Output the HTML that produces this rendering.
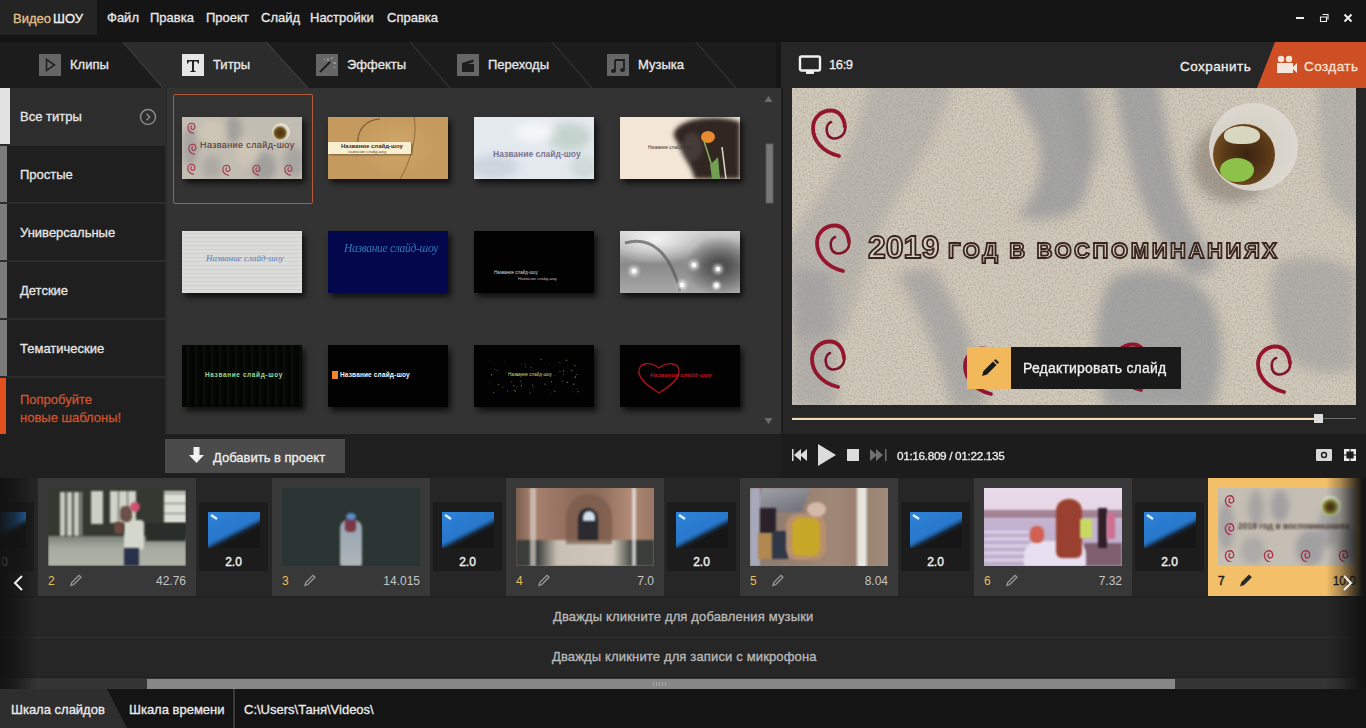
<!DOCTYPE html><html><head><meta charset="utf-8"><style>
*{margin:0;padding:0;box-sizing:border-box}
html,body{width:1366px;height:728px;overflow:hidden;background:#151515;font-family:"Liberation Sans",sans-serif;color:#e6e6e6}
body{position:relative}
.a{position:absolute}
.t13{font-size:13px;line-height:15px;white-space:nowrap;-webkit-text-stroke:0.3px currentColor}
.menu{top:10px;color:#e8e8e8}
.ticon{top:12px;width:22px;height:22px;background:#666666}
.tlabel{top:16px;color:#e8e8e8}
.sitem{left:0;width:165px;height:58px;background:#1f1f1f;border-bottom:2px solid #2c2c2c}
.sitem .ind{position:absolute;left:0;top:0;width:7px;height:56px;background:#7b7b7b}
.sitem .txt{position:absolute;left:20px;top:21px}
.th{width:120px;height:62px;box-shadow:3px 4px 6px rgba(0,0,0,.7);overflow:hidden}
.clip{top:478px;width:158px;height:119px;background:#383838}
.ph{left:10px;top:10px;width:138px;height:78px;overflow:hidden}
.ph>div{filter:blur(1px)}
.num{left:10px;top:96px;font-size:12px;color:#e6bf5e}
.dur{right:10px;top:96px;font-size:12px;color:#c4c4c4;text-align:right}
.pen{left:31px;top:95px;width:14px;height:14px}
.trans{top:478px;width:76px;height:119px;background:#262626}
.tbox{left:3px;top:24px;width:69px;height:69px;background:#1c1c1c}
.tblue{left:9px;top:10px;width:52px;height:36px;background:linear-gradient(153deg,#2e82d8 0%,#2878cc 50%,#1e5a9a 55%,#18283a 60%,#161616 66%,#161616 100%)}
.tnum{left:0;width:69px;top:53px;text-align:center;font-size:12px;color:#f2f2f2;-webkit-text-stroke:.4px #f2f2f2}
</style></head><body>
<div class="a" style="left:0;top:0;width:1366px;height:42px;background:#151515"></div>
<div class="a" style="left:0;top:0;width:97px;height:35px;background:#242424"></div>
<span class="a t13" style="left:13px;top:11px;color:#e5c38c">Видео</span><span class="a t13" style="left:53px;top:11px;color:#f2f2f2">ШОУ</span>
<span class="a t13 menu" style="left:107px">Файл</span>
<span class="a t13 menu" style="left:150px">Правка</span>
<span class="a t13 menu" style="left:206px">Проект</span>
<span class="a t13 menu" style="left:261px">Слайд</span>
<span class="a t13 menu" style="left:310px">Настройки</span>
<span class="a t13 menu" style="left:387px">Справка</span>
<svg class="a" style="left:1290px;top:8px" width="70" height="20" viewBox="1290 8 70 20">
<rect x="1296" y="17" width="8" height="2" fill="#eee"/>
<path d="M1322.5 14.5h5.5v5M1320.5 17h6v4.5h-6z" stroke="#eee" stroke-width="1.1" fill="none"/>
<path d="M1344.5 14.5l7 7M1351.5 14.5l-7 7" stroke="#eee" stroke-width="2"/>
</svg>
<div class="a" style="left:0;top:42px;width:777px;height:46px;background:#1c1c1c"></div>
<svg class="a" style="left:0;top:42px" width="777" height="46" viewBox="0 42 777 46">
<polygon points="123,42 266,42 308,88 163,88" fill="#2c2c2c"/>
<line x1="123" y1="42" x2="163" y2="88" stroke="#383838" stroke-width="1.5"/>
<line x1="266" y1="42" x2="308" y2="88" stroke="#383838" stroke-width="1.5"/>
<line x1="410" y1="42" x2="450" y2="88" stroke="#2e2e2e" stroke-width="1.5"/>
<line x1="552" y1="42" x2="592" y2="88" stroke="#2e2e2e" stroke-width="1.5"/>
<line x1="696" y1="42" x2="736" y2="88" stroke="#2e2e2e" stroke-width="1.5"/>
</svg>
<div class="a ticon" style="left:39px;top:54px"><svg width="22" height="22"><path d="M7.5 5.5L15.5 11L7.5 16.5Z" fill="none" stroke="#222" stroke-width="1.6"/></svg></div>
<div class="a ticon" style="left:182px;top:54px;background:#e6e6e6"><svg width="22" height="22"><path d="M5 6h12v3.5h-1.2l-.6-2H12v9.2l1.6.4V18H8.4v-.9l1.6-.4V7.5H6.8l-.6 2H5z" fill="#222"/></svg></div>
<div class="a ticon" style="left:316px;top:54px"><svg width="22" height="22"><path d="M4 18L14 8" stroke="#1e1e1e" stroke-width="2.2"/><path d="M12 4v3M17 9h3M15 5l2-2M8 5l1 1M18 13l1 1" stroke="#bbb" stroke-width="1"/></svg></div>
<div class="a ticon" style="left:457px;top:54px"><svg width="22" height="22"><rect x="5" y="10" width="12" height="8" fill="#1e1e1e"/><path d="M5 9L16 5.5L16.8 8L5.8 11.5z" fill="#1e1e1e"/></svg></div>
<div class="a ticon" style="left:607px;top:54px"><svg width="22" height="22"><path d="M8 6h9v10" stroke="#1e1e1e" stroke-width="1.8" fill="none"/><path d="M8 6v11" stroke="#1e1e1e" stroke-width="1.8"/><ellipse cx="6.5" cy="17" rx="2.5" ry="2" fill="#1e1e1e"/><ellipse cx="15.5" cy="16" rx="2.5" ry="2" fill="#1e1e1e"/></svg></div>
<span class="a t13 tlabel" style="left:70px;top:57px">Клипы</span>
<span class="a t13 tlabel" style="left:213px;top:57px">Титры</span>
<span class="a t13 tlabel" style="left:347px;top:57px">Эффекты</span>
<span class="a t13 tlabel" style="left:488px;top:57px">Переходы</span>
<span class="a t13 tlabel" style="left:638px;top:57px">Музыка</span>
<div class="a" style="left:776px;top:42px;width:5px;height:46px;background:#161616"></div>
<div class="a" style="left:781px;top:42px;width:585px;height:392px;background:#262626"></div>
<svg class="a" style="left:798px;top:55px" width="26" height="22"><rect x="2" y="1.5" width="20" height="14" rx="1.5" fill="none" stroke="#f0f0f0" stroke-width="2.4"/><rect x="8" y="16" width="8" height="3" fill="#f0f0f0"/></svg>
<span class="a t13" style="left:829px;top:57px;color:#ededed;letter-spacing:-.4px">16:9</span>
<span class="a t13" style="left:1180px;top:59px;color:#f0f0f0;font-size:13.5px;letter-spacing:.45px">Сохранить</span>
<svg class="a" style="left:1255px;top:42px" width="111" height="46"><polygon points="20,0 111,0 111,46 2,46" fill="#cf4f24"/>
<circle cx="26" cy="17" r="3.2" fill="#f5e6dc"/><circle cx="34" cy="17" r="3.2" fill="#f5e6dc"/><rect x="22" y="21" width="16" height="10" fill="#f5e6dc"/><path d="M37 26L42 21V31Z" fill="#f5e6dc"/></svg>
<span class="a t13" style="left:1304px;top:59px;color:#f7e3d6;font-size:13.5px;letter-spacing:.45px">Создать</span>
<div class="a" style="left:0;top:88px;width:168px;height:346px;background:#1b1b1b"></div>
<div class="a sitem" style="top:88px;background:#2d2d2d;border-bottom-color:#2d2d2d"><div class="ind" style="width:10px;background:#e2e2e2"></div><span class="txt t13">Все титры</span><svg class="a" style="left:138px;top:19px" width="20" height="20"><circle cx="10" cy="10" r="7.5" fill="none" stroke="#8a8a8a" stroke-width="1.5"/><path d="M8.5 6.8L11.7 10L8.5 13.2" fill="none" stroke="#8a8a8a" stroke-width="1.5"/></svg></div>
<div class="a sitem" style="top:146px"><div class="ind"></div><span class="txt t13">Простые</span></div>
<div class="a sitem" style="top:204px"><div class="ind"></div><span class="txt t13">Универсальные</span></div>
<div class="a sitem" style="top:262px"><div class="ind"></div><span class="txt t13">Детские</span></div>
<div class="a sitem" style="top:320px"><div class="ind"></div><span class="txt t13">Тематические</span></div>
<div class="a sitem" style="top:378px;height:56px;border-bottom:none"><div class="ind" style="background:#e2501e;width:6px;height:56px"></div><span class="txt t13" style="top:13px;line-height:18px;color:#cc5430">Попробуйте<br>новые шаблоны!</span></div>
<div class="a" style="left:165px;top:88px;width:616px;height:346px;background:#333333"></div><div class="a" style="left:781px;top:88px;width:2px;height:346px;background:#1c1c1c"></div><div class="a" style="left:165px;top:88px;width:2px;height:346px;background:#2a2a2a"></div>
<div class="a" style="left:173px;top:94px;width:140px;height:110px;border:1px solid #b5583c;border-radius:2px"></div>
<div class="a th" style="left:182px;top:117px;background:#c2bdb2"><svg class="a" style="left:0;top:0" width="120" height="62"><defs><filter id="b2"><feGaussianBlur stdDeviation="3"/></filter></defs><g filter="url(#b2)" fill="#8e8e90"><ellipse cx="52" cy="12" rx="8" ry="14" opacity=".6"/><ellipse cx="82" cy="50" rx="12" ry="15" opacity=".6"/><ellipse cx="8" cy="30" rx="8" ry="20" opacity=".5"/><ellipse cx="30" cy="50" rx="10" ry="12" opacity=".4"/><ellipse cx="112" cy="45" rx="10" ry="16" opacity=".5"/></g><g fill="#d2c9b8" opacity=".7" filter="url(#b2)"><ellipse cx="30" cy="15" rx="14" ry="12"/><ellipse cx="65" cy="35" rx="12" ry="14"/></g></svg><svg class="a" style="left:3px;top:4px" width="14" height="14"><g transform="scale(0.22)"><path d="M31 22C25 24 25 37 33 38.5C41 39 46 33 45 27C44 16 38 10.5 31 10.5C20 10.5 13 19 13 28C13 40 22 52 39 56" fill="none" stroke="#a8304a" stroke-width="5" stroke-linecap="round"/></g></svg><svg class="a" style="left:4px;top:25px" width="14" height="14"><g transform="scale(0.22)"><path d="M31 22C25 24 25 37 33 38.5C41 39 46 33 45 27C44 16 38 10.5 31 10.5C20 10.5 13 19 13 28C13 40 22 52 39 56" fill="none" stroke="#a8304a" stroke-width="5" stroke-linecap="round"/></g></svg><svg class="a" style="left:3px;top:45px" width="14" height="14"><g transform="scale(0.22)"><path d="M31 22C25 24 25 37 33 38.5C41 39 46 33 45 27C44 16 38 10.5 31 10.5C20 10.5 13 19 13 28C13 40 22 52 39 56" fill="none" stroke="#a8304a" stroke-width="5" stroke-linecap="round"/></g></svg><svg class="a" style="left:38px;top:46px" width="14" height="14"><g transform="scale(0.22)"><path d="M31 22C25 24 25 37 33 38.5C41 39 46 33 45 27C44 16 38 10.5 31 10.5C20 10.5 13 19 13 28C13 40 22 52 39 56" fill="none" stroke="#a8304a" stroke-width="5" stroke-linecap="round"/></g></svg><svg class="a" style="left:68px;top:46px" width="14" height="14"><g transform="scale(0.22)"><path d="M31 22C25 24 25 37 33 38.5C41 39 46 33 45 27C44 16 38 10.5 31 10.5C20 10.5 13 19 13 28C13 40 22 52 39 56" fill="none" stroke="#a8304a" stroke-width="5" stroke-linecap="round"/></g></svg><svg class="a" style="left:100px;top:46px" width="14" height="14"><g transform="scale(0.22)"><path d="M31 22C25 24 25 37 33 38.5C41 39 46 33 45 27C44 16 38 10.5 31 10.5C20 10.5 13 19 13 28C13 40 22 52 39 56" fill="none" stroke="#a8304a" stroke-width="5" stroke-linecap="round"/></g></svg><div class="a" style="left:18px;top:23px;font-size:9px;color:#5a4038;white-space:nowrap;letter-spacing:.4px;-webkit-text-stroke:.15px #5a4038">Название слайд-шоу</div><div class="a" style="left:90px;top:6px;width:18px;height:18px;border-radius:50%;background:radial-gradient(circle at 45% 55%,#4a3010 0,#6a4a18 35%,#e0dcc8 55%,#f0ece0 100%)"></div></div>
<div class="a th" style="left:328px;top:117px;background:radial-gradient(ellipse 40px 30px at 70px 30px,#d0a868,transparent),#c59a5e"><svg class="a" style="left:0;top:0" width="120" height="62"><path d="M30 30C28 12 38 3 52 2" fill="none" stroke="#5a3a18" stroke-width="1.2" opacity=".7"/><path d="M86 0C90 20 82 45 72 62" fill="none" stroke="#6a4a20" stroke-width="1" opacity=".6"/></svg><div class="a" style="left:0;top:25px;width:83px;height:12px;background:#f7efd0;box-shadow:1px 1px 2px rgba(0,0,0,.4)"></div><div class="a" style="left:13px;top:26px;font-size:6px;font-weight:bold;color:#3a2a1a;white-space:nowrap">Название слайд-шоу</div><div class="a" style="left:20px;top:32px;font-size:4px;color:#5a4a3a;white-space:nowrap">название слайд-шоу</div></div>
<div class="a th" style="left:474px;top:117px;background:#e4e9ee"><svg class="a" style="left:0;top:0" width="120" height="62"><defs><filter id="b3"><feGaussianBlur stdDeviation="4"/></filter></defs><g filter="url(#b3)"><ellipse cx="95" cy="20" rx="22" ry="14" fill="#b8cac0" opacity=".7"/><ellipse cx="20" cy="50" rx="25" ry="12" fill="#c4ccd8" opacity=".7"/><ellipse cx="60" cy="15" rx="20" ry="10" fill="#f4f6f8"/><ellipse cx="110" cy="50" rx="14" ry="12" fill="#c0d0c8" opacity=".6"/></g></svg><div class="a" style="left:19px;top:32px;font-size:8.5px;font-weight:bold;color:#7a7494;white-space:nowrap">Название слайд-шоу</div></div>
<div class="a th" style="left:620px;top:117px;background:#f3e6d6"><svg class="a" style="left:0;top:0" width="120" height="62"><defs><filter id="b4"><feGaussianBlur stdDeviation="2"/></filter></defs><g filter="url(#b4)"><path d="M58 10C70 0 100 -2 120 5L120 62L75 62C70 45 62 40 60 30C55 20 50 18 58 10Z" fill="#302824"/><ellipse cx="72" cy="30" rx="10" ry="14" fill="#4a403c" opacity=".8"/></g><ellipse cx="88" cy="20" rx="7" ry="6" fill="#e88a30"/><path d="M84 24L96 62" stroke="#88b060" stroke-width="1.5"/><path d="M90 48L98 40L100 62L92 62Z" fill="#70a050"/><path d="M102 30L106 62" stroke="#d8e0c8" stroke-width="1.5"/></svg><div class="a" style="left:28px;top:28px;font-size:4.5px;color:#333;white-space:nowrap">Название слайд-шоу</div></div>
<div class="a th" style="left:182px;top:231px;background:repeating-linear-gradient(0deg,#dcdcda 0,#dcdcda 3px,#cfcfcd 3px,#cfcfcd 4px),#d8d8d6"><div class="a" style="left:24px;top:22px;font-size:9px;font-style:italic;color:#5a7ab0;font-family:'Liberation Serif',serif;white-space:nowrap">Название слайд-шоу</div></div>
<div class="a th" style="left:328px;top:231px;background:#03084c"><div class="a" style="left:16px;top:11px;font-size:11.5px;font-style:italic;color:#3a88c8;font-family:'Liberation Serif',serif;white-space:nowrap;letter-spacing:-.3px;opacity:.85">Название слайд-шоу</div></div>
<div class="a th" style="left:474px;top:231px;background:#020202"><div class="a" style="left:20px;top:39px;font-size:4.5px;color:#ddd;white-space:nowrap">Название слайд-шоу</div><div class="a" style="left:44px;top:45px;font-size:4px;color:#bbb;white-space:nowrap">Название слайд-шоу</div></div>
<div class="a th" style="left:620px;top:231px;background:radial-gradient(ellipse 50px 25px at 35px 8px,#f4f4f4,rgba(240,240,240,0)),radial-gradient(ellipse 35px 30px at 100px 35px,#404040,rgba(60,60,60,0)),linear-gradient(180deg,#d0d0d0,#8a8a8a 55%,#a8a8a8)"><svg class="a" style="left:0;top:0" width="120" height="62"><path d="M5 12C30 5 50 20 60 60" fill="none" stroke="#5a5a5a" stroke-width="3" opacity=".7"/></svg><div class="a" style="left:12px;top:38px;width:4px;height:4px;border-radius:50%;background:#fff;box-shadow:0 0 4px 2px #fff"></div><div class="a" style="left:72px;top:32px;width:4px;height:4px;border-radius:50%;background:#fff;box-shadow:0 0 4px 2px #fff"></div><div class="a" style="left:96px;top:36px;width:4px;height:4px;border-radius:50%;background:#fff;box-shadow:0 0 4px 2px #fff"></div><div class="a" style="left:60px;top:52px;width:4px;height:4px;border-radius:50%;background:#fff;box-shadow:0 0 4px 2px #fff"></div><div class="a" style="left:95px;top:53px;width:3px;height:3px;border-radius:50%;background:#fff;box-shadow:0 0 3px 2px #fff"></div></div>
<div class="a th" style="left:182px;top:345px;background:repeating-linear-gradient(90deg,#040604 0,#040604 5px,#0a140b 6px,#040604 8px)"><div class="a" style="left:23px;top:26px;font-size:6.5px;font-weight:bold;color:#9ad89a;white-space:nowrap;letter-spacing:.6px">Название слайд-шоу</div></div>
<div class="a th" style="left:328px;top:345px;background:#020202"><div class="a" style="left:4px;top:26px;width:6px;height:8px;background:#f0862a"></div><div class="a" style="left:12px;top:26px;font-size:6.5px;font-weight:bold;color:#f4f4f4;white-space:nowrap;letter-spacing:.15px">Название слайд-шоу</div></div>
<div class="a th" style="left:474px;top:345px;background:#020202"><svg class="a" style="left:0;top:0" width="120" height="62"><g fill="#a8a860" opacity=".7"><circle cx="71.1" cy="39.2" r="0.6"/><circle cx="99.8" cy="39.2" r="0.7"/><circle cx="17.6" cy="29.8" r="0.7"/><circle cx="73.4" cy="44.6" r="0.3"/><circle cx="57.2" cy="22.4" r="0.5"/><circle cx="66.7" cy="14.4" r="0.4"/><circle cx="40.2" cy="45.2" r="0.6"/><circle cx="29.4" cy="41.1" r="0.4"/><circle cx="70.6" cy="18.3" r="0.3"/><circle cx="93.4" cy="21.1" r="0.4"/><circle cx="103.4" cy="43.7" r="0.4"/><circle cx="101.5" cy="32.3" r="0.6"/><circle cx="33.4" cy="46.0" r="0.6"/><circle cx="102.0" cy="44.4" r="0.4"/><circle cx="47.5" cy="19.6" r="0.4"/><circle cx="20.9" cy="24.2" r="0.5"/><circle cx="15.3" cy="37.0" r="0.4"/><circle cx="42.9" cy="41.8" r="0.5"/><circle cx="43.4" cy="30.4" r="0.6"/><circle cx="20.1" cy="47.2" r="0.3"/><circle cx="82.5" cy="42.7" r="0.3"/><circle cx="85.9" cy="26.5" r="0.5"/><circle cx="15.8" cy="15.6" r="0.4"/><circle cx="101.0" cy="20.7" r="0.6"/><circle cx="98.7" cy="46.0" r="0.4"/><circle cx="46.9" cy="31.8" r="0.6"/><circle cx="24.7" cy="39.4" r="0.6"/><circle cx="92.4" cy="15.2" r="0.7"/><circle cx="23.2" cy="25.6" r="0.5"/><circle cx="97.6" cy="25.6" r="0.7"/><circle cx="64.1" cy="24.6" r="0.4"/><circle cx="31.0" cy="16.7" r="0.4"/><circle cx="77.0" cy="47.9" r="0.4"/><circle cx="19.4" cy="47.5" r="0.5"/><circle cx="51.5" cy="22.1" r="0.5"/><circle cx="89.4" cy="29.5" r="0.5"/><circle cx="20.0" cy="45.1" r="0.3"/><circle cx="59.4" cy="42.5" r="0.4"/><circle cx="80.8" cy="46.3" r="0.6"/><circle cx="85.9" cy="17.6" r="0.5"/><circle cx="28.4" cy="42.7" r="0.4"/><circle cx="55.8" cy="48.0" r="0.6"/><circle cx="102.8" cy="29.4" r="0.5"/><circle cx="80.7" cy="30.3" r="0.4"/><circle cx="51.3" cy="19.0" r="0.5"/><circle cx="104.0" cy="46.6" r="0.6"/><circle cx="59.9" cy="25.5" r="0.3"/><circle cx="39.5" cy="40.6" r="0.6"/><circle cx="47.5" cy="40.7" r="0.6"/><circle cx="77.5" cy="36.6" r="0.6"/><circle cx="47.7" cy="38.0" r="0.4"/><circle cx="58.7" cy="40.2" r="0.6"/><circle cx="41.4" cy="46.1" r="0.6"/><circle cx="67.3" cy="14.4" r="0.5"/><circle cx="37.6" cy="36.8" r="0.5"/><circle cx="88.5" cy="36.0" r="0.6"/><circle cx="46.3" cy="35.9" r="0.6"/><circle cx="89.5" cy="25.9" r="0.6"/><circle cx="93.3" cy="37.4" r="0.7"/><circle cx="101.1" cy="31.6" r="0.5"/></g></svg><div class="a" style="left:34px;top:27px;font-size:4.5px;color:#d8d27a;white-space:nowrap">Название слайд-шоу</div></div>
<div class="a th" style="left:620px;top:345px;background:#020202"><svg class="a" style="left:14px;top:14px" width="50" height="40"><path d="M25 34C12 26 4 19 5 11C6 4 16 2 25 9C34 2 44 4 45 11C46 19 38 26 25 34Z" fill="none" stroke="#a8101c" stroke-width="1.3"/></svg><div class="a" style="left:30px;top:27px;font-size:6px;font-style:italic;font-weight:bold;color:#c01020;white-space:nowrap">Название слайд-шоу</div></div>
<svg class="a" style="left:762px;top:92px" width="14" height="340"><path d="M2.5 10L6.5 4L10.5 10Z" fill="#6c6c6c"/><rect x="4" y="52" width="7" height="59" fill="#777777" stroke="#5a5a5a" stroke-width="1"/><path d="M2.5 326L6.5 332L10.5 326Z" fill="#6c6c6c"/></svg>
<div class="a" style="left:0;top:434px;width:781px;height:44px;background:#1f1f1f"></div>
<div class="a" style="left:165px;top:439px;width:180px;height:34px;background:#4b4b4b"></div>
<svg class="a" style="left:188px;top:446px" width="18" height="20"><path d="M5.5 1h6v8h4.5L8.5 17L1 9h4.5z" fill="#f2f2f2"/></svg>
<span class="a t13" style="left:213px;top:450px;color:#f0f0f0">Добавить в проект</span>
<div class="a" style="left:792px;top:88px;width:564px;height:317px;overflow:hidden;background:#d1c9b9" id="prev">
<svg class="a" style="left:0;top:0" width="564" height="317" viewBox="0 0 564 317">
<defs><filter id="bl" x="-50%" y="-50%" width="200%" height="200%"><feGaussianBlur stdDeviation="6"/></filter>
<filter id="grain" x="0" y="0" width="100%" height="100%"><feTurbulence type="fractalNoise" baseFrequency="0.55" numOctaves="2" seed="3"/><feColorMatrix values="0 0 0 0 0.3  0 0 0 0 0.28  0 0 0 0 0.26  0 0 0 -2.2 1.25"/></filter></defs>
<g filter="url(#bl)" fill="#8c9098">
<path d="M80 -10L160 -10C155 30 130 70 105 110C80 150 65 200 55 245L0 250L-10 160C15 130 45 90 65 40Z" opacity="0.32"/>
<path d="M215 -10L290 -10C305 30 305 80 290 115C280 130 250 135 225 128C245 110 255 80 245 50C240 30 225 15 215 -10Z" opacity="0.64"/>
<path d="M322 -10L366 -10C375 40 380 90 395 125C405 150 420 165 425 180L400 190C380 170 360 140 345 100C335 60 325 30 322 -10Z" opacity="0.64"/>
<path d="M105 185L140 180C160 210 185 250 195 320L160 320C150 270 125 220 105 185Z" opacity="0.51"/>
<path d="M320 190C350 175 400 180 420 215C435 250 430 290 420 320L315 320C300 280 300 220 320 190Z" opacity="0.68"/>
<path d="M485 175C510 165 550 170 564 185L564 280C540 290 500 285 488 255C478 230 475 195 485 175Z" opacity="0.47"/>
<path d="M525 -10L570 -10L570 135C550 130 535 110 530 80Z" opacity="0.38"/>
<path d="M270 -10L312 -10L312 70L290 80Z" opacity="0.26"/>
<path d="M0 180L40 185L45 320L0 320Z" opacity="0.42"/>
</g>
<rect x="0" y="0" width="564" height="317" filter="url(#grain)" opacity=".55"/>
</svg>
<svg class="a" style="left:8px;top:12px" width="60" height="64"><path d="M31 22C25 24 25 37 33 38.5C41 39 46 33 45 27" fill="none" stroke="#7e1428" stroke-width="2.6" stroke-linecap="round"/><path d="M45 27C44 16 38 10.5 31 10.5C20 10.5 13 19 13 28C13 40 22 52 39 56" fill="none" stroke="#94162e" stroke-width="3.8" stroke-linecap="round"/></svg>
<svg class="a" style="left:12px;top:127px" width="60" height="64"><path d="M31 22C25 24 25 37 33 38.5C41 39 46 33 45 27" fill="none" stroke="#7e1428" stroke-width="2.6" stroke-linecap="round"/><path d="M45 27C44 16 38 10.5 31 10.5C20 10.5 13 19 13 28C13 40 22 52 39 56" fill="none" stroke="#94162e" stroke-width="3.8" stroke-linecap="round"/></svg>
<svg class="a" style="left:7px;top:243px" width="60" height="64"><path d="M31 22C25 24 25 37 33 38.5C41 39 46 33 45 27" fill="none" stroke="#7e1428" stroke-width="2.6" stroke-linecap="round"/><path d="M45 27C44 16 38 10.5 31 10.5C20 10.5 13 19 13 28C13 40 22 52 39 56" fill="none" stroke="#94162e" stroke-width="3.8" stroke-linecap="round"/></svg>
<svg class="a" style="left:160px;top:250px" width="60" height="64"><path d="M31 22C25 24 25 37 33 38.5C41 39 46 33 45 27" fill="none" stroke="#7e1428" stroke-width="2.6" stroke-linecap="round"/><path d="M45 27C44 16 38 10.5 31 10.5C20 10.5 13 19 13 28C13 40 22 52 39 56" fill="none" stroke="#94162e" stroke-width="3.8" stroke-linecap="round"/></svg>
<svg class="a" style="left:310px;top:246px" width="60" height="64"><path d="M31 22C25 24 25 37 33 38.5C41 39 46 33 45 27" fill="none" stroke="#7e1428" stroke-width="2.6" stroke-linecap="round"/><path d="M45 27C44 16 38 10.5 31 10.5C20 10.5 13 19 13 28C13 40 22 52 39 56" fill="none" stroke="#94162e" stroke-width="3.8" stroke-linecap="round"/></svg>
<svg class="a" style="left:453px;top:248px" width="60" height="64"><path d="M31 22C25 24 25 37 33 38.5C41 39 46 33 45 27" fill="none" stroke="#7e1428" stroke-width="2.6" stroke-linecap="round"/><path d="M45 27C44 16 38 10.5 31 10.5C20 10.5 13 19 13 28C13 40 22 52 39 56" fill="none" stroke="#94162e" stroke-width="3.8" stroke-linecap="round"/></svg>
<div class="a" style="left:400px;top:35px;width:80px;height:80px;border-radius:50%;background:rgba(80,70,60,.35);filter:blur(6px)"></div>
<div class="a" style="left:417px;top:15px;width:89px;height:88px;border-radius:50%;background:radial-gradient(circle at 50% 50%,rgba(214,208,196,.85) 0,rgba(222,218,210,.9) 70%,#f4f2ee 78%,#fbfbfa 88%,#d4d2ce 100%)"></div>
<div class="a" style="left:421px;top:36px;width:62px;height:61px;border-radius:50%;background:radial-gradient(circle at 55% 50%,#3a2410 0,#5a3a18 50%,#7a5020 80%,#a07838 100%)"></div>
<div class="a" style="left:432px;top:38px;width:36px;height:18px;border-radius:50% 50% 40% 40%;background:#e6e8d4;opacity:.9"></div>
<div class="a" style="left:428px;top:70px;width:34px;height:24px;border-radius:50%;background:#8cc24a"></div>
<div class="a" style="left:76px;top:141px;white-space:nowrap;color:#d6cebe;-webkit-text-stroke:1.8px #3a2420;font-weight:bold"><span style="font-size:32px">2019 </span><span style="font-size:22px;letter-spacing:2.6px">ГОД В ВОСПОМИНАНИЯХ</span></div>
</div>
<div class="a" style="left:967px;top:347px;width:44px;height:42px;background:#f2b95b"></div>
<svg class="a" style="left:979px;top:357px" width="22" height="22"><path d="M3 19l1.5-5L14 4.5l3.5 3.5L8 17.5z" fill="#1a1a1a"/><path d="M15 3.5l1.5-1.5 3.5 3.5-1.5 1.5z" fill="#1a1a1a"/></svg>
<div class="a" style="left:1011px;top:347px;width:170px;height:42px;background:#1a1a1a"></div>
<span class="a" style="left:1023px;top:360px;font-size:14px;line-height:16px;color:#f0f0f0;white-space:nowrap;letter-spacing:.2px;-webkit-text-stroke:.3px #f0f0f0">Редактировать слайд</span>
<div class="a" style="left:792px;top:417px;width:526px;height:3px;background:#5a3a18"></div><div class="a" style="left:792px;top:418px;width:526px;height:2px;background:#f5dab0"></div>
<div class="a" style="left:1318px;top:418px;width:38px;height:1px;background:#707070"></div>
<div class="a" style="left:1314px;top:414px;width:9px;height:9px;background:#dcdcdc"></div>
<div class="a" style="left:781px;top:434px;width:585px;height:44px;background:#1c1c1c"></div>
<svg class="a" style="left:790px;top:440px" width="100" height="30" viewBox="790 440 100 30">
<rect x="792" y="449" width="1.5" height="12" fill="#dcdcdc"/>
<path d="M794 455L801 449V461Z M800 455L807 449V461Z" fill="#dcdcdc"/>
<path d="M818 444L836 455L818 466Z" fill="#dcdcdc"/>
<rect x="847" y="449" width="12" height="12" fill="#dcdcdc"/>
<path d="M870 449L877 455L870 461Z M876 449L883 455L876 461Z" fill="#6e6e6e"/>
<rect x="885" y="449" width="1.5" height="12" fill="#6e6e6e"/>
</svg>
<span class="a" style="left:897px;top:450px;font-size:11.8px;line-height:13px;color:#ececec;white-space:nowrap;letter-spacing:-.35px;-webkit-text-stroke:.3px #ececec">01:16.809 / 01:22.135</span>
<svg class="a" style="left:1312px;top:445px" width="50" height="20" viewBox="1312 445 50 20">
<rect x="1316" y="449" width="16" height="12" rx="1" fill="#d8d8d8"/><circle cx="1324" cy="455" r="3.2" fill="#1c1c1c"/><circle cx="1324" cy="455" r="1.8" fill="#d8d8d8"/>
<path d="M1345.2 454.5v-4.3h4.3M1350.5 450.2h4.3v4.3M1354.8 455.5v4.3h-4.3M1349.5 459.8h-4.3v-4.3" fill="none" stroke="#ececec" stroke-width="2.4"/>
</svg>
<div class="a" style="left:0;top:478px;width:1366px;height:211px;background:#262626"></div>
<div class="a clip" style="left:38px"><div class="a ph" style="background:#343830"><div class="a" style="left:0;top:48px;width:138px;height:30px;background:linear-gradient(180deg,#7a8078,#a8aca0 40%,#b0b4a8)"></div><div class="a" style="left:12px;top:4px;width:22px;height:44px;background:repeating-linear-gradient(90deg,#c8ccc0 0,#c8ccc0 5px,#4a4e46 5px,#4a4e46 7px)"></div><div class="a" style="left:43px;top:3px;width:12px;height:33px;background:#ccd0c4"></div><div class="a" style="left:62px;top:3px;width:26px;height:32px;background:repeating-linear-gradient(90deg,#d0d4c8 0,#d0d4c8 8px,#505450 8px,#505450 9px)"></div><div class="a" style="left:116px;top:3px;width:22px;height:32px;background:repeating-linear-gradient(0deg,#dcdfd6 0,#dcdfd6 9px,#707470 9px,#707470 10px)"></div><div class="a" style="left:98px;top:35px;width:40px;height:18px;background:#2a2e2a"></div><div class="a" style="left:76px;top:32px;width:20px;height:30px;background:#d4d8cc;border-radius:4px"></div><div class="a" style="left:76px;top:60px;width:15px;height:18px;background:#28304a"></div><div class="a" style="left:72px;top:18px;width:12px;height:16px;border-radius:5px;background:#6a5048"></div><div class="a" style="left:82px;top:14px;width:10px;height:10px;border-radius:50%;background:#d05070"></div><div class="a" style="left:66px;top:34px;width:10px;height:12px;background:#6a4a40;border-radius:4px"></div></div><span class="a num">2</span><svg class="a pen" width="14" height="14"><path d="M2 12.5l.8-3L10 2.3l2 2-7.2 7.2z" fill="none" stroke="#9a9a9a" stroke-width="1.3"/></svg><span class="a dur">42.76</span></div>
<div class="a clip" style="left:272px"><div class="a ph" style="background:#2a3432"><div class="a" style="left:58px;top:32px;width:22px;height:46px;background:linear-gradient(180deg,#a8b8c8,#c8ccd0);border-radius:8px 8px 2px 2px;opacity:.85"></div><div class="a" style="left:63px;top:30px;width:11px;height:14px;background:#7a3848;border-radius:4px"></div><div class="a" style="left:64px;top:25px;width:10px;height:7px;background:#5a8ac8;border-radius:50%"></div></div><span class="a num">3</span><svg class="a pen" width="14" height="14"><path d="M2 12.5l.8-3L10 2.3l2 2-7.2 7.2z" fill="none" stroke="#9a9a9a" stroke-width="1.3"/></svg><span class="a dur">14.015</span></div>
<div class="a clip" style="left:506px"><div class="a ph" style="background:linear-gradient(90deg,#7a5e50 0%,#a88270 12%,#9a7462 30%,#8a6a58 45%,#8e6c5a 60%,#b08a76 82%,#9a7664 100%)"><div class="a" style="left:0;top:52px;width:138px;height:26px;background:linear-gradient(90deg,#3a3e3a 0,#3a3e3a 15%,#c8c0b4 30%,#d0c8bc 70%,#3a3e3a 85%,#3a3e3a 100%)"></div><div class="a" style="left:50px;top:6px;width:46px;height:50px;background:#7a5a4a;border-radius:23px 23px 0 0;opacity:.7"></div><div class="a" style="left:62px;top:20px;width:20px;height:32px;background:#2a2a30;border-radius:10px 10px 0 0"></div><div class="a" style="left:67px;top:23px;width:12px;height:10px;background:#d0e0ec;border-radius:6px 6px 0 0"></div><div class="a" style="left:14px;top:0;width:6px;height:78px;background:#d8d0c8;opacity:.7"></div><div class="a" style="left:116px;top:0;width:4px;height:78px;background:#e8e8e8;opacity:.8"></div></div><span class="a num">4</span><svg class="a pen" width="14" height="14"><path d="M2 12.5l.8-3L10 2.3l2 2-7.2 7.2z" fill="none" stroke="#9a9a9a" stroke-width="1.3"/></svg><span class="a dur">7.0</span></div>
<div class="a clip" style="left:740px"><div class="a ph" style="background:linear-gradient(90deg,#8a7a70 0%,#9a8272 40%,#a08878 60%,#9a8070 76%,#e4e4dc 79%,#e8e8e0 83%,#9a8474 86%,#a08a7a 100%)"><div class="a" style="left:8px;top:0;width:48px;height:24px;background:linear-gradient(160deg,#a0a0a8,#70707a);transform:skewX(-20deg)"></div><div class="a" style="left:0;top:0;width:10px;height:78px;background:#a8a8bc"></div><div class="a" style="left:10px;top:20px;width:16px;height:26px;background:#2a2228"></div><div class="a" style="left:8px;top:45px;width:15px;height:26px;background:#b08850"></div><div class="a" style="left:22px;top:43px;width:16px;height:28px;background:#303848"></div><div class="a" style="left:36px;top:26px;width:40px;height:46px;background:#b89070;border-radius:12px"></div><div class="a" style="left:42px;top:30px;width:28px;height:38px;background:#c8a828;border-radius:8px"></div><div class="a" style="left:57px;top:14px;width:19px;height:15px;background:#d4b8a8;border-radius:50%"></div></div><span class="a num">5</span><svg class="a pen" width="14" height="14"><path d="M2 12.5l.8-3L10 2.3l2 2-7.2 7.2z" fill="none" stroke="#9a9a9a" stroke-width="1.3"/></svg><span class="a dur">8.04</span></div>
<div class="a clip" style="left:974px"><div class="a ph" style="background:linear-gradient(180deg,#eadcea 0%,#e6d6e6 26%,#a88898 30%,#a08090 36%,#c4b4d0 40%,#bcaccc 100%)"><div class="a" style="left:0;top:40px;width:45px;height:38px;background:repeating-linear-gradient(0deg,#c0b0d0 0,#c0b0d0 5px,#e4dcec 5px,#e4dcec 7px)"></div><div class="a" style="left:100px;top:55px;width:38px;height:23px;background:#806070"></div><div class="a" style="left:40px;top:53px;width:62px;height:25px;background:#e8e0f0;border-radius:14px 14px 0 0"></div><div class="a" style="left:72px;top:11px;width:26px;height:59px;background:#9a4030;border-radius:12px 12px 6px 6px"></div><div class="a" style="left:46px;top:38px;width:14px;height:17px;background:#d06050;border-radius:40%"></div><div class="a" style="left:96px;top:31px;width:12px;height:19px;background:#c8d860"></div><div class="a" style="left:114px;top:20px;width:9px;height:40px;background:#302028"></div><div class="a" style="left:123px;top:25px;width:8px;height:26px;background:#d07090"></div></div><span class="a num">6</span><svg class="a pen" width="14" height="14"><path d="M2 12.5l.8-3L10 2.3l2 2-7.2 7.2z" fill="none" stroke="#9a9a9a" stroke-width="1.3"/></svg><span class="a dur">7.32</span></div>
<div class="a clip" style="left:1208px;background:#f3bf69"><div class="a ph" style="background:#c4beb4;overflow:hidden"><svg class="a" style="left:0;top:0" width="138" height="78"><defs><filter id="b7"><feGaussianBlur stdDeviation="3"/></filter></defs><g filter="url(#b7)" fill="#8a8c94"><ellipse cx="62" cy="18" rx="9" ry="16" opacity=".6"/><ellipse cx="38" cy="20" rx="8" ry="18" opacity=".5"/><ellipse cx="110" cy="40" rx="10" ry="20" opacity=".5"/><ellipse cx="92" cy="60" rx="14" ry="18" opacity=".6"/><ellipse cx="8" cy="38" rx="8" ry="24" opacity=".5"/><ellipse cx="35" cy="62" rx="12" ry="14" opacity=".4"/><ellipse cx="130" cy="55" rx="10" ry="18" opacity=".5"/></g></svg><svg class="a" style="left:4px;top:5px" width="14" height="14"><g transform="scale(0.26)"><path d="M31 22C25 24 25 37 33 38.5C41 39 46 33 45 27C44 16 38 10.5 31 10.5C20 10.5 13 19 13 28C13 40 22 52 39 56" fill="none" stroke="#a8304a" stroke-width="5" stroke-linecap="round"/></g></svg><svg class="a" style="left:4px;top:33px" width="14" height="14"><g transform="scale(0.26)"><path d="M31 22C25 24 25 37 33 38.5C41 39 46 33 45 27C44 16 38 10.5 31 10.5C20 10.5 13 19 13 28C13 40 22 52 39 56" fill="none" stroke="#a8304a" stroke-width="5" stroke-linecap="round"/></g></svg><svg class="a" style="left:4px;top:60px" width="14" height="14"><g transform="scale(0.26)"><path d="M31 22C25 24 25 37 33 38.5C41 39 46 33 45 27C44 16 38 10.5 31 10.5C20 10.5 13 19 13 28C13 40 22 52 39 56" fill="none" stroke="#a8304a" stroke-width="5" stroke-linecap="round"/></g></svg><svg class="a" style="left:43px;top:60px" width="14" height="14"><g transform="scale(0.26)"><path d="M31 22C25 24 25 37 33 38.5C41 39 46 33 45 27C44 16 38 10.5 31 10.5C20 10.5 13 19 13 28C13 40 22 52 39 56" fill="none" stroke="#a8304a" stroke-width="5" stroke-linecap="round"/></g></svg><svg class="a" style="left:80px;top:60px" width="14" height="14"><g transform="scale(0.26)"><path d="M31 22C25 24 25 37 33 38.5C41 39 46 33 45 27C44 16 38 10.5 31 10.5C20 10.5 13 19 13 28C13 40 22 52 39 56" fill="none" stroke="#a8304a" stroke-width="5" stroke-linecap="round"/></g></svg><svg class="a" style="left:118px;top:60px" width="14" height="14"><g transform="scale(0.26)"><path d="M31 22C25 24 25 37 33 38.5C41 39 46 33 45 27C44 16 38 10.5 31 10.5C20 10.5 13 19 13 28C13 40 22 52 39 56" fill="none" stroke="#a8304a" stroke-width="5" stroke-linecap="round"/></g></svg><div class="a" style="left:20px;top:33px;font-size:8.5px;font-weight:bold;color:#4a3a34;white-space:nowrap">2019 год в воспоминаниях</div><div class="a" style="left:103px;top:8px;width:20px;height:20px;border-radius:50%;background:radial-gradient(circle at 45% 55%,#3a2810 0,#6a5020 30%,#9ab050 48%,#f0ece4 62%,#f8f6f0 100%)"></div></div><span class="a num" style="color:#1e1e1e;-webkit-text-stroke:.5px #1e1e1e">7</span><svg class="a pen" width="14" height="14"><path d="M2 12.5l.8-3L10 2.3l2 2-7.2 7.2z" fill="#2a2a2a" stroke="#2a2a2a" stroke-width="1.3"/></svg><span class="a dur" style="color:#1e1e1e;-webkit-text-stroke:.3px #1e1e1e">10.0</span></div>
<div class="a trans" style="left:-38px"><div class="a tbox"><div class="a tblue"><svg class="a" style="left:1px;top:1px" width="10" height="10"><path d="M2 2L8 6" stroke="#dfefff" stroke-width="2.5"/></svg></div><span class="a tnum">2.0</span></div></div>
<div class="a trans" style="left:196px"><div class="a tbox"><div class="a tblue"><svg class="a" style="left:1px;top:1px" width="10" height="10"><path d="M2 2L8 6" stroke="#dfefff" stroke-width="2.5"/></svg></div><span class="a tnum">2.0</span></div></div>
<div class="a trans" style="left:430px"><div class="a tbox"><div class="a tblue"><svg class="a" style="left:1px;top:1px" width="10" height="10"><path d="M2 2L8 6" stroke="#dfefff" stroke-width="2.5"/></svg></div><span class="a tnum">2.0</span></div></div>
<div class="a trans" style="left:664px"><div class="a tbox"><div class="a tblue"><svg class="a" style="left:1px;top:1px" width="10" height="10"><path d="M2 2L8 6" stroke="#dfefff" stroke-width="2.5"/></svg></div><span class="a tnum">2.0</span></div></div>
<div class="a trans" style="left:898px"><div class="a tbox"><div class="a tblue"><svg class="a" style="left:1px;top:1px" width="10" height="10"><path d="M2 2L8 6" stroke="#dfefff" stroke-width="2.5"/></svg></div><span class="a tnum">2.0</span></div></div>
<div class="a trans" style="left:1132px"><div class="a tbox"><div class="a tblue"><svg class="a" style="left:1px;top:1px" width="10" height="10"><path d="M2 2L8 6" stroke="#dfefff" stroke-width="2.5"/></svg></div><span class="a tnum">2.0</span></div></div>
<div class="a" style="left:0;top:596px;width:1366px;height:1px;background:#1e1e1e"></div>
<div class="a" style="left:0;top:597px;width:1366px;height:40px;background:#262626"></div>
<div class="a" style="left:0;top:637px;width:1366px;height:1px;background:#303030"></div>
<span class="a t13" style="left:553px;top:609px;color:#bababa;letter-spacing:.15px">Дважды кликните для добавления музыки</span>
<span class="a t13" style="left:552px;top:649px;color:#bababa;letter-spacing:.15px">Дважды кликните для записи с микрофона</span>
<div class="a" style="left:0;top:677px;width:1366px;height:1px;background:#1e1e1e"></div>
<div class="a" style="left:0;top:678px;width:1366px;height:11px;background:#353535"></div>
<div class="a" style="left:147px;top:679px;width:1028px;height:10px;background:#878787"></div>
<div class="a" style="left:653px;top:682px;width:14px;height:4px;background:repeating-linear-gradient(90deg,#aaa 0,#aaa 1px,transparent 1px,transparent 3px)"></div>
<div class="a" style="left:0;top:478px;width:40px;height:211px;background:linear-gradient(90deg,rgba(18,18,18,.95) 0,rgba(18,18,18,.75) 14px,rgba(18,18,18,0) 38px)"></div>
<div class="a" style="left:1326px;top:478px;width:40px;height:211px;background:linear-gradient(90deg,rgba(18,18,18,0) 0,rgba(18,18,18,.3) 14px,rgba(18,18,18,.75) 28px,rgba(18,18,18,.97) 36px,rgba(18,18,18,1) 40px)"></div>
<svg class="a" style="left:10px;top:574px" width="16" height="18"><path d="M12 2L5 9L12 16" fill="none" stroke="#f0f0f0" stroke-width="2"/></svg>
<svg class="a" style="left:1340px;top:574px" width="16" height="18"><path d="M4 2L11 9L4 16" fill="none" stroke="#f0f0f0" stroke-width="2"/></svg>
<div class="a" style="left:0;top:689px;width:1366px;height:39px;background:#141414"></div>
<svg class="a" style="left:0;top:689px" width="240" height="39"><polygon points="0,0 107,0 127,39 0,39" fill="#2e2e2e"/><rect x="233" y="0" width="2" height="39" fill="#3a3a3a"/></svg>
<span class="a t13" style="left:11px;top:702px;color:#ececec">Шкала слайдов</span>
<span class="a t13" style="left:129px;top:702px;color:#ececec">Шкала времени</span>
<span class="a t13" style="left:244px;top:702px;color:#ececec">C:\Users\Таня\Videos\</span>
</body></html>
